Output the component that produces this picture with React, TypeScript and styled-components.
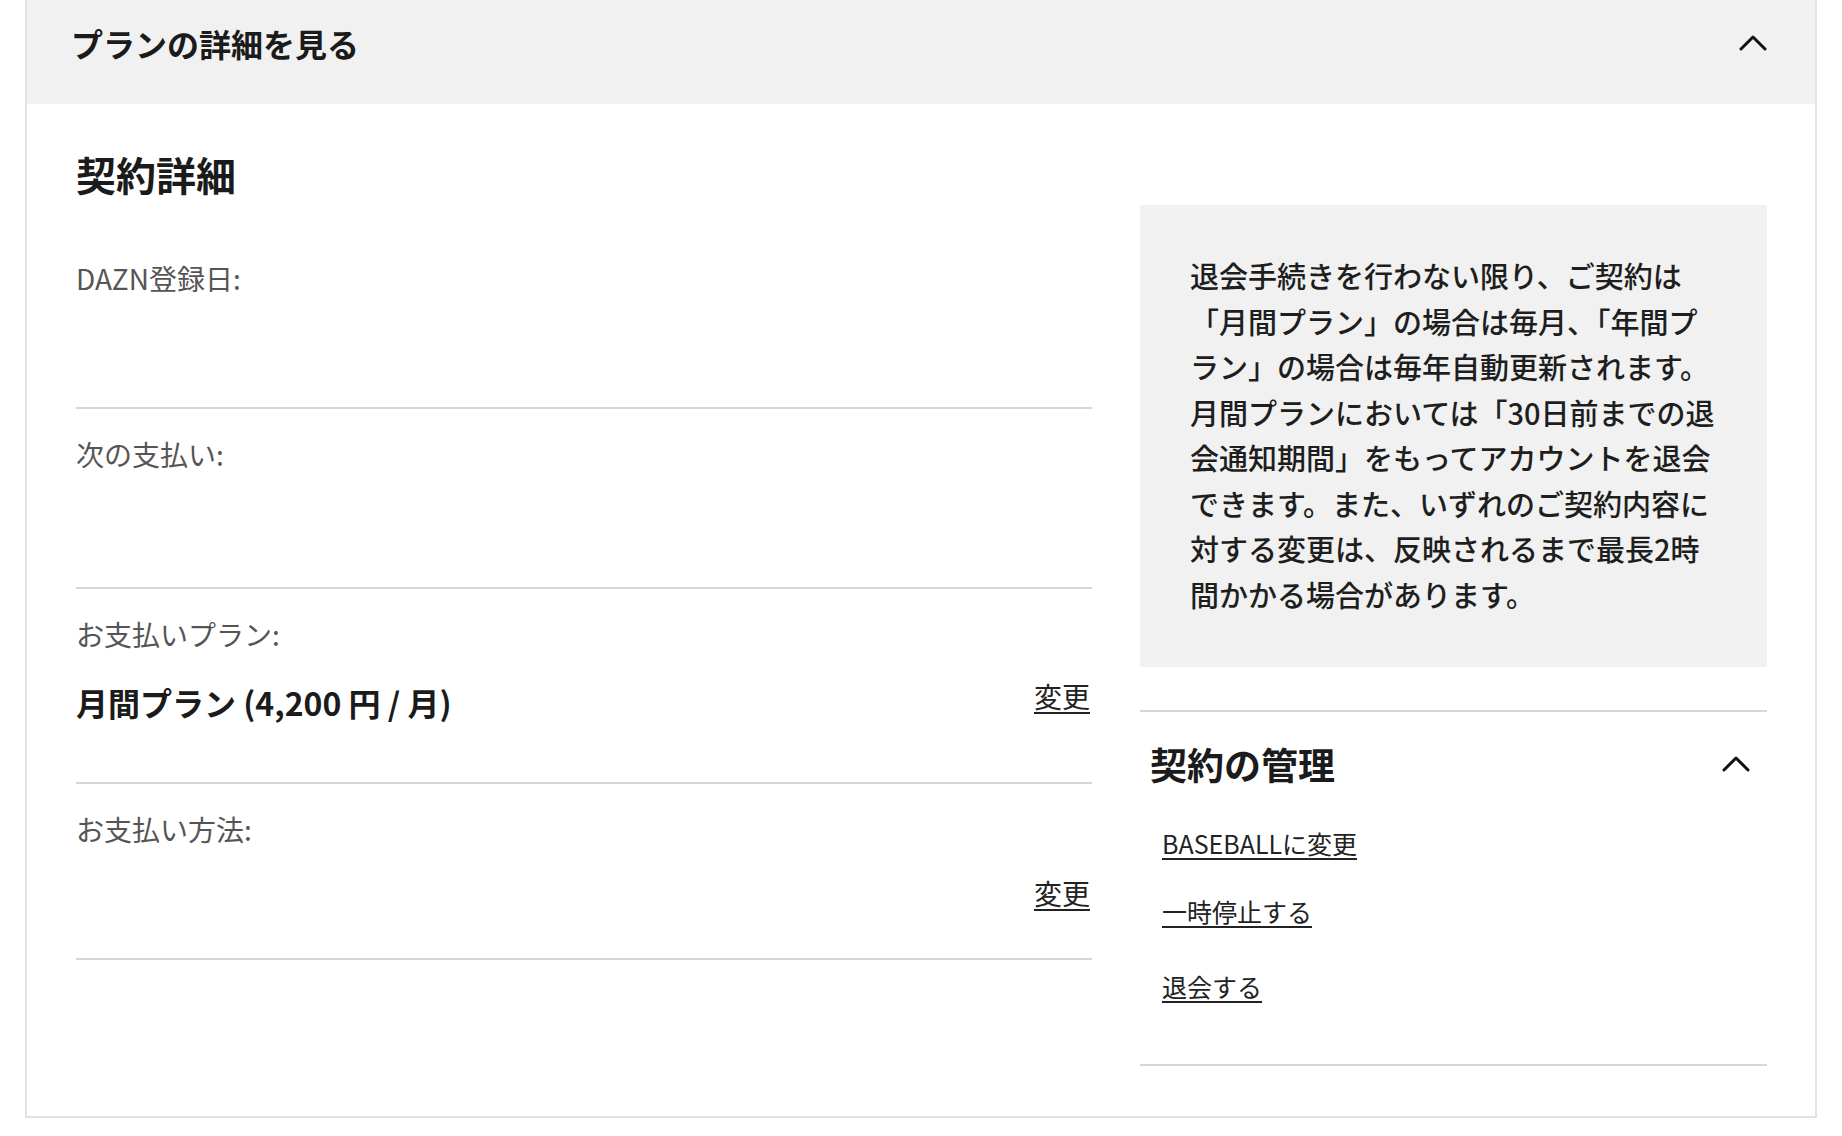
import styled, { createGlobalStyle } from "styled-components";

const GlobalStyle = createGlobalStyle`
  body {
    margin: 0;
    background: #fff;
    font-family: "Noto Sans CJK JP", "Noto Sans", sans-serif;
    color: #1b1b1b;
  }
`;

const Card = styled.section`
  box-sizing: border-box;
  width: 1792px;
  margin-left: 25px;
  border: 2px solid #e2e2e2;
  border-top: none;
  background: #fff;
`;

const Header = styled.div`
  box-sizing: border-box;
  height: 104px;
  display: flex;
  align-items: center;
  justify-content: space-between;
  padding: 0 48px 18px 44px;
  background: #f0f1f0;
`;

const HeaderTitle = styled.h2`
  margin: 0;
  font-size: 32px;
  font-weight: 700;
  line-height: 1;
`;

const Body = styled.div`
  display: grid;
  grid-template-columns: 1016px 627px;
  column-gap: 48px;
  align-items: start;
  padding: 46px 48px 50px 49px;
`;

const SectionTitle = styled.h3`
  margin: 0 0 35px;
  font-size: 40px;
  line-height: 48px;
  font-weight: 700;
`;

const Row = styled.div<{ $height: number }>`
  box-sizing: border-box;
  height: ${(p) => p.$height}px;
  padding-top: 25px;
  border-bottom: 2px solid #d6d6d6;
`;

const Label = styled.div`
  font-size: 28px;
  line-height: 40px;
  color: #555;
`;

const ValueLine = styled.div<{ $gap: number }>`
  display: flex;
  align-items: flex-start;
  justify-content: space-between;
  margin-top: ${(p) => p.$gap}px;
  height: 40px;
`;

const Value = styled.span`
  font-size: 32px;
  line-height: 40px;
  font-weight: 700;
`;

const ChangeLink = styled.a`
  font-size: 28px;
  line-height: 28px;
  color: #222;
  text-decoration: underline;
  text-underline-offset: 4px;
  margin-left: auto;
  margin-right: 2px;
`;

const Side = styled.aside`
  margin-top: 55px;
`;

const InfoBox = styled.div`
  padding: 48px 40px 50px 50px;
  background: #f0f1f0;
  font-size: 29px;
  line-height: 45.5px;
  font-weight: 500;
  color: #1e1e1e;
`;

const Manage = styled.div`
  margin-top: 43px;
  border-top: 2px solid #d6d6d6;
  border-bottom: 2px solid #d6d6d6;
  padding: 30px 17px 61px 0;
`;

const ManageHead = styled.div`
  display: flex;
  align-items: center;
  justify-content: space-between;
  padding-left: 10px;
`;

const ManageTitle = styled.h3`
  margin: 0;
  font-size: 37px;
  line-height: 44px;
  font-weight: 700;
`;

const LinkList = styled.div`
  display: flex;
  flex-direction: column;
  align-items: flex-start;
  gap: 34px;
  margin-top: 40px;
  padding-left: 22px;

  & > a:last-child {
    margin-top: 7px;
  }
`;

const ActionLink = styled.a`
  font-size: 25px;
  line-height: 34px;
  color: #222;
  text-decoration: underline;
  text-decoration-thickness: 2px;
  text-underline-offset: 4px;
`;

function ChevronUp() {
  return (
    <svg width="28" height="18" viewBox="0 0 28 18" fill="none">
      <polyline
        points="2,15 14,3 26,15"
        stroke="#111"
        strokeWidth="3"
        strokeLinecap="round"
        strokeLinejoin="round"
      />
    </svg>
  );
}

export default function App() {
  return (
    <>
      <GlobalStyle />
      <Card>
        <Header>
          <HeaderTitle>プランの詳細を見る</HeaderTitle>
          <ChevronUp />
        </Header>
        <Body>
          <div>
            <SectionTitle>契約詳細</SectionTitle>
            <Row $height={176}>
              <Label>DAZN登録日:</Label>
            </Row>
            <Row $height={180}>
              <Label>次の支払い:</Label>
            </Row>
            <Row $height={195}>
              <Label>お支払いプラン:</Label>
              <ValueLine $gap={28}>
                <Value>月間プラン (4,200 円 / 月)</Value>
                <ChangeLink href="#">変更</ChangeLink>
              </ValueLine>
            </Row>
            <Row $height={176}>
              <Label>お支払い方法:</Label>
              <ValueLine $gap={30}>
                <ChangeLink href="#">変更</ChangeLink>
              </ValueLine>
            </Row>
          </div>
          <Side>
            <InfoBox>
              退会手続きを行わない限り、ご契約は
              <br />
              「月間プラン」の場合は毎月、「年間プ
              <br />
              ラン」の場合は毎年自動更新されます。
              <br />
              月間プランにおいては「30日前までの退
              <br />
              会通知期間」をもってアカウントを退会
              <br />
              できます。また、いずれのご契約内容に
              <br />
              対する変更は、反映されるまで最長2時
              <br />
              間かかる場合があります。
            </InfoBox>
            <Manage>
              <ManageHead>
                <ManageTitle>契約の管理</ManageTitle>
                <ChevronUp />
              </ManageHead>
              <LinkList>
                <ActionLink href="#">BASEBALLに変更</ActionLink>
                <ActionLink href="#">一時停止する</ActionLink>
                <ActionLink href="#">退会する</ActionLink>
              </LinkList>
            </Manage>
          </Side>
        </Body>
      </Card>
    </>
  );
}
